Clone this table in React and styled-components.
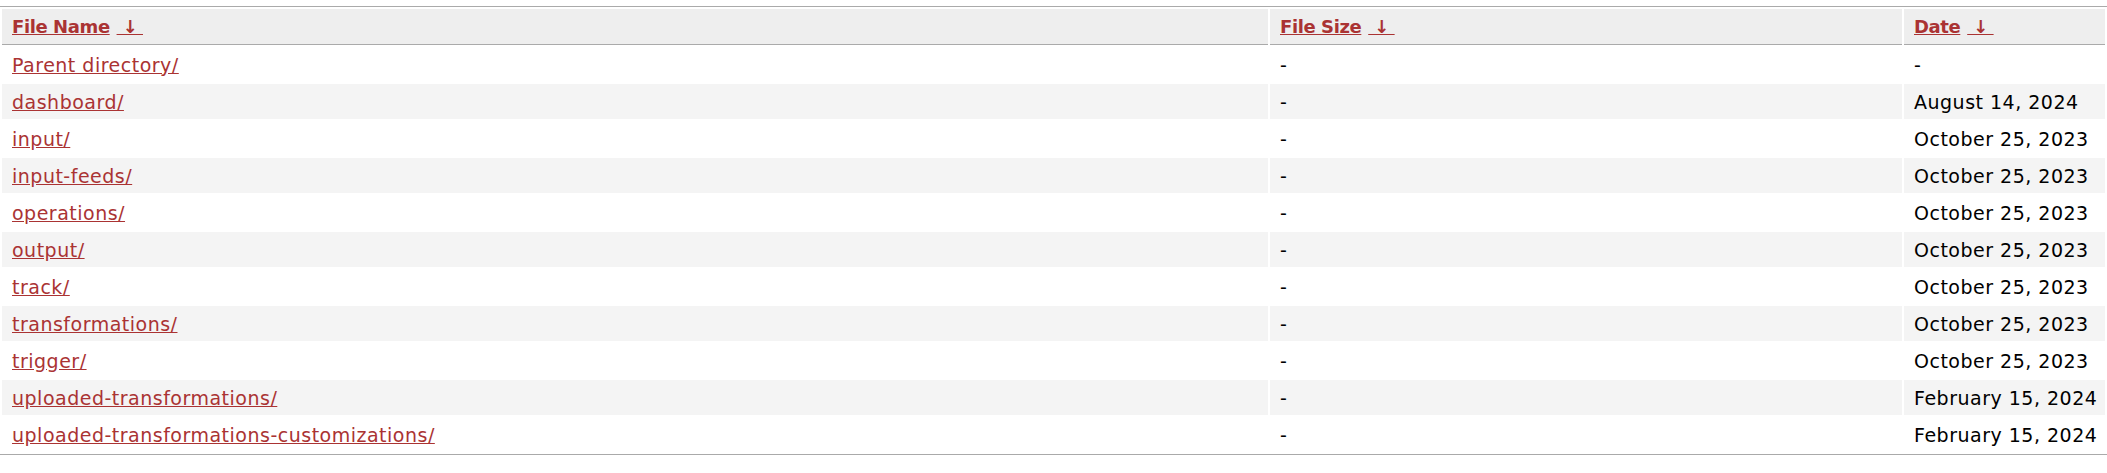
import React from 'react';
import styled, {createGlobalStyle} from 'styled-components';

const GlobalStyle = createGlobalStyle`
  html, body {
    margin: 0;
    background: #fff;
  }
  body {
    font-family: "DejaVu Sans", Verdana, sans-serif;
  }
`;

const Listing = styled.table`
  width: 100%;
  margin-top: 6px;
  border-collapse: separate;
  border-spacing: 2px;
  border-top: 1px solid #aaa;
  border-bottom: 1px solid #aaa;
  table-layout: fixed;
  font-size: 19px;
  letter-spacing: 0.5px;
`;

const HeadCell = styled.th`
  box-sizing: border-box;
  width: ${(p) => p.$width || 'auto'};
  height: 36px;
  padding: 0 10px;
  text-align: left;
  font-size: 18px;
  letter-spacing: -0.4px;
  font-weight: bold;
  background: #eee;
  border-bottom: 1px solid #aaa;
  white-space: nowrap;
`;

const Arrow = styled.a`
  color: #a33;
  text-decoration: underline;
  padding: 0 1px;
`;

const Row = styled.tr`
  &:nth-child(even) {
    background: #f4f4f4;
  }
`;

const Cell = styled.td`
  height: 35px;
  padding: 0 10px;
  box-sizing: border-box;
  color: #000;
  white-space: nowrap;
`;

const Link = styled.a`
  color: #a33;
  text-decoration: underline;

  &:hover {
    color: #e33;
  }
`;

const entries = [
  {name: 'Parent directory/', size: '-', date: '-'},
  {name: 'dashboard/', size: '-', date: 'August 14, 2024'},
  {name: 'input/', size: '-', date: 'October 25, 2023'},
  {name: 'input-feeds/', size: '-', date: 'October 25, 2023'},
  {name: 'operations/', size: '-', date: 'October 25, 2023'},
  {name: 'output/', size: '-', date: 'October 25, 2023'},
  {name: 'track/', size: '-', date: 'October 25, 2023'},
  {name: 'transformations/', size: '-', date: 'October 25, 2023'},
  {name: 'trigger/', size: '-', date: 'October 25, 2023'},
  {name: 'uploaded-transformations/', size: '-', date: 'February 15, 2024'},
  {name: 'uploaded-transformations-customizations/', size: '-', date: 'February 15, 2024'},
];

const columns = [
  {label: 'File Name', key: 'N', width: '1266px'},
  {label: 'File Size', key: 'S', width: '632px'},
  {label: 'Date', key: 'M'},
];

const App = () => {
  return (
    <>
      <GlobalStyle />
      <Listing>
        <thead>
          <tr>
            {columns.map((col) => (
              <HeadCell key={col.key} $width={col.width}>
                <Link href={`?C=${col.key}&O=A`}>{col.label}</Link>
                {'\u00a0'}
                <Arrow href={`?C=${col.key}&O=D`}>{'\u00a0\u2193\u00a0'}</Arrow>
              </HeadCell>
            ))}
          </tr>
        </thead>
        <tbody>
          {entries.map((entry) => (
            <Row key={entry.name}>
              <Cell>
                <Link href={entry.name === 'Parent directory/' ? '../' : entry.name}>{entry.name}</Link>
              </Cell>
              <Cell>{entry.size}</Cell>
              <Cell>{entry.date}</Cell>
            </Row>
          ))}
        </tbody>
      </Listing>
    </>
  );
};

export default App;
